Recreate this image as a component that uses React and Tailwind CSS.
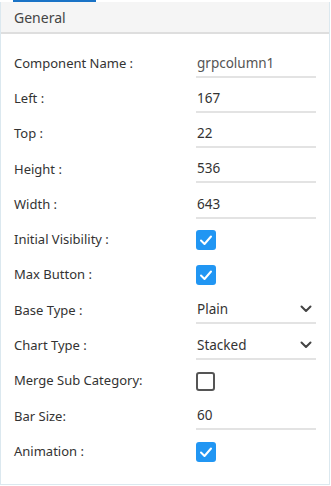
import React from "react";

const rows = [
  { label: "Component Name :", type: "text", value: "grpcolumn1", muted: true },
  { label: "Left :", type: "text", value: "167" },
  { label: "Top :", type: "text", value: "22" },
  { label: "Height :", type: "text", value: "536" },
  { label: "Width :", type: "text", value: "643" },
  { label: "Initial Visibility :", type: "check", checked: true },
  { label: "Max Button :", type: "check", checked: true },
  { label: "Base Type :", type: "select", value: "Plain" },
  { label: "Chart Type :", type: "select", value: "Stacked" },
  { label: "Merge Sub Category:", type: "check", checked: false },
  { label: "Bar Size:", type: "text", value: "60" },
  { label: "Animation :", type: "check", checked: true },
];

function Check({ checked }) {
  if (!checked) {
    return <div className="w-[19px] h-[19px] rounded-[3px] border-2 border-[#555]"></div>;
  }
  return (
    <div className="w-[20px] h-[20px] rounded-[3px] bg-[#2196f3] flex items-center justify-center">
      <svg width="14" height="14" viewBox="0 0 14 14" fill="none">
        <path d="M2 7.5 L5.5 11 L12 3.5" stroke="white" strokeWidth="2" strokeLinecap="round" strokeLinejoin="round" />
      </svg>
    </div>
  );
}

function Field({ row }) {
  if (row.type === "check") {
    return <Check checked={row.checked} />;
  }
  return (
    <div className="w-[120px] h-[28px] border-b-2 border-[#e3e3e3] flex items-center justify-between pl-[1px] pr-[4px] text-[13.5px]">
      <span className={row.muted ? "text-[#555]" : "text-[#333]"}>{row.value}</span>
      {row.type === "select" && (
        <svg width="12" height="8" viewBox="0 0 12 8" fill="none">
          <path d="M1.5 1.5 L6 6 L10.5 1.5" stroke="#444" strokeWidth="2" strokeLinecap="round" strokeLinejoin="round" />
        </svg>
      )}
    </div>
  );
}

export default function App() {
  return (
    <div className="w-[331px] h-[486px] bg-white font-['Noto_Sans',sans-serif] text-[13px] text-[#333]">
      <div className="ml-[13px] w-[83px] h-[2px] bg-[#1a73c6]"></div>
      <div className="w-[330px] h-[483px] border border-[#dbe8ef] border-t-0">
        <div className="h-[32px] bg-[#f5f5f5] border-b-2 border-[#dedede] flex items-center px-[13px] text-[14px] text-[#444]">
          General
        </div>
        <div className="pt-[12px] pl-[13px]">
          {rows.map((row, i) => (
            <div key={i} className="h-[35.27px] flex items-center">
              <div className="w-[182px]">{row.label}</div>
              <Field row={row} />
            </div>
          ))}
        </div>
      </div>
    </div>
  );
}
